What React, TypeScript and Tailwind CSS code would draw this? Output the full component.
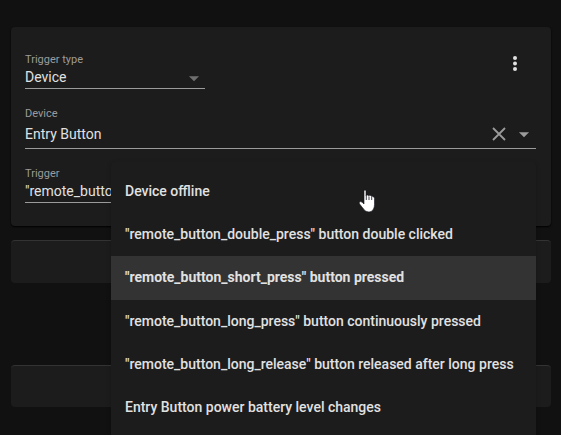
import { useState } from "react";

const triggers = [
  "Device offline",
  '"remote_button_double_press" button double clicked',
  '"remote_button_short_press" button pressed',
  '"remote_button_long_press" button continuously pressed',
  '"remote_button_long_release" button released after long press',
  "Entry Button power battery level changes",
];

function Caret({ className }: { className: string }) {
  return (
    <svg viewBox="0 0 24 24" className={className} aria-hidden="true">
      <path d="M6.500 10l5.500 5.500 5.500-5.500z" fill="currentColor" />
    </svg>
  );
}

function HandCursor() {
  return (
    <svg
      viewBox="0 0 18 24"
      className="pointer-events-none absolute top-[27px] left-[247px] h-6 w-[18px]"
      aria-hidden="true"
    >
      <path
        d="M6 2.2 Q6 1 7 1 Q8 1 8 2.2 V7 Q8.300 6 9.500 6 Q10.500 6 10.700 7 Q11.200 6.300 12 6.300 Q13.300 6.300 13.500 7.600 Q14 7.200 14.800 7.400 Q16.500 7.700 16.500 9.500 V15.500 Q16.500 18 15.500 20 Q14 23 11 23 Q7.500 23 5.500 20 L2 15.500 Q0.800 14 1.300 13.200 Q2.500 12 4.200 13.300 L6 15 Z"
        fill="#fff"
        stroke="#10101c"
        strokeWidth="0.600"
      />
      <path
        d="M8.300 7V11 M11 7.500V11 M13.700 8V11"
        stroke="#10101c"
        strokeWidth="0.800"
      />
    </svg>
  );
}

export default function App() {
  const [device, setDevice] = useState("Entry Button");
  const [trigger, setTrigger] = useState(triggers[2]);

  return (
    <main className="h-screen overflow-hidden bg-[#111111] pt-[27px] pr-2.5 pl-[11px] font-[Roboto,sans-serif] text-sm text-[#e1e1e1]">
      <section className="rounded-sm bg-[#1c1c1c] pt-6 pr-[15px] pb-[23px] pl-3.5 shadow-[0_1px_2px_#000000]">
        <div className="relative flex flex-col gap-4">
          <div className="flex items-start justify-between">
            <div className="w-[180px]">
              <label htmlFor="type" className="block text-[11px] leading-[18px] text-[#9b9b9b]">
                Trigger type
              </label>
              <div className="relative">
                <select
                  id="type"
                  className="block h-5 w-full appearance-none border-b border-[#9b9b9b] pb-1 leading-4 outline-none"
                >
                  <option>Device</option>
                </select>
                <Caret className="pointer-events-none absolute right-0 bottom-0 h-[22px] w-[22px] text-[#6f6f6f]" />
              </div>
            </div>
            <button type="button" aria-label="Menu" className="flex h-6 w-[42px] justify-center">
              <svg viewBox="0 0 24 24" className="h-6 w-6" fill="currentColor" aria-hidden="true">
                <circle cx="12" cy="7" r="2" />
                <circle cx="12" cy="12.500" r="2" />
                <circle cx="12" cy="18" r="2" />
              </svg>
            </button>
          </div>

          <div>
            <label htmlFor="device" className="block text-[11px] leading-[18px] text-[#9b9b9b]">
              Device
            </label>
            <div className="flex h-[26px] items-center border-b border-[#9b9b9b] pb-1 text-[#9b9b9b]">
              <input
                id="device"
                value={device}
                onChange={(e) => setDevice(e.target.value)}
                className="min-w-0 flex-1 text-[#e1e1e1] outline-none"
              />
              <button type="button" aria-label="Clear" onClick={() => setDevice("")}>
                <svg viewBox="0 0 24 24" className="h-6 w-6" aria-hidden="true">
                  <path d="M6 6L18 18M18 6L6 18" stroke="currentColor" strokeWidth="1.800" />
                </svg>
              </button>
              <button type="button" aria-label="Show devices" className="pr-px pl-0.5">
                <Caret className="h-[22px] w-[22px]" />
              </button>
            </div>
          </div>

          <div>
            <label htmlFor="trigger" className="block text-[11px] leading-[18px] text-[#9b9b9b]">
              Trigger
            </label>
            <select
              id="trigger"
              value={trigger}
              onChange={(e) => setTrigger(e.target.value)}
              className="block h-5 w-full appearance-none border-b border-[#9b9b9b] pb-1 leading-4 outline-none"
            >
              {triggers.map((item) => (
                <option key={item}>{item}</option>
              ))}
            </select>
          </div>

          <div className="absolute top-[111px] right-0 left-[86px] rounded-sm bg-[#1c1c1c] pt-2 pb-4 shadow-[0_2px_2px_#00000024,0_1px_5px_#0000001f]">
            <ul role="listbox" aria-label="Trigger">
              {triggers.map((item) => (
                <li
                  key={item}
                  role="option"
                  aria-selected={item === trigger}
                  onClick={() => setTrigger(item)}
                  className={
                    item === trigger
                      ? "flex h-11 items-center bg-[#333333] px-3.5 pb-0.5 font-bold whitespace-nowrap"
                      : "flex h-[43px] items-center px-3.5 pb-0.5 font-medium whitespace-nowrap"
                  }
                >
                  {item}
                </li>
              ))}
            </ul>
            <HandCursor />
          </div>
        </div>
      </section>

      <section className="mt-3.5 h-[43px] rounded-sm border-t border-[#333333] bg-[#1c1c1c]" />
      <section className="mt-[82px] h-[42px] rounded-sm border-t border-[#333333] bg-[#1c1c1c]" />
    </main>
  );
}
